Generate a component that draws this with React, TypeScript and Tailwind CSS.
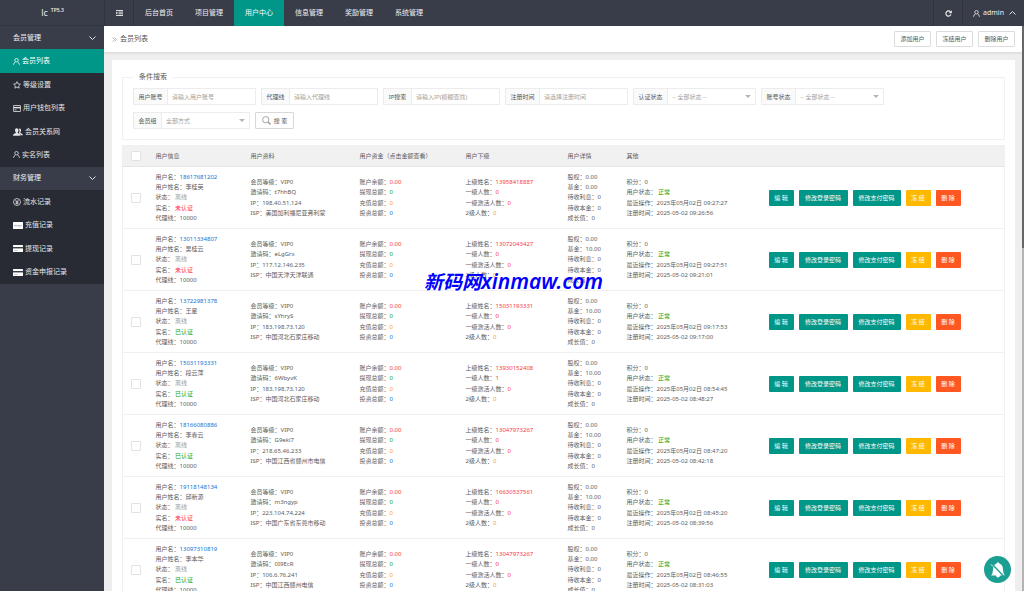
import type { ReactNode } from 'react';

type Tone = 'red' | 'green' | 'orange' | 'blue';

const tones: Record<Tone, string> = {
  red: 'text-[#f93a47]',
  green: 'text-[#0ea30e]',
  orange: 'text-[#ff9f00]',
  blue: 'text-[#0f74d4]',
};

interface User {
  phone: string;
  name: string;
  verified: boolean;
  code: string;
  ip: string;
  isp: string;
  parent: string;
  level1: number;
  fund: string;
  lastSeen: string;
  registered: string;
}

const users: User[] = [
  { phone: '18617681202', name: '李桂英', verified: false, code: 't7hhBQ', ip: '198.40.51.124', isp: '美国加利福尼亚弗利蒙', parent: '13958418887', level1: 0, fund: '0.00', lastSeen: '2025年05月02日 09:27:27', registered: '2025-05-02 09:26:56' },
  { phone: '13011334807', name: '吴桂云', verified: false, code: 'eLgGrx', ip: '117.12.146.235', isp: '中国天津天津联通', parent: '13072043427', level1: 0, fund: '10.00', lastSeen: '2025年05月02日 09:27:51', registered: '2025-05-02 09:21:01' },
  { phone: '13722981378', name: '王星', verified: true, code: 'sYhryS', ip: '183.198.73.120', isp: '中国河北石家庄移动', parent: '15031193331', level1: 0, fund: '10.00', lastSeen: '2025年05月02日 09:17:53', registered: '2025-05-02 09:17:00' },
  { phone: '15031193331', name: '段云萍', verified: true, code: '6WbyvK', ip: '183.198.73.120', isp: '中国河北石家庄移动', parent: '13930152408', level1: 1, fund: '10.00', lastSeen: '2025年05月02日 08:54:45', registered: '2025-05-02 08:48:27' },
  { phone: '18166080886', name: '李春云', verified: true, code: 'G9ekl7', ip: '218.65.46.233', isp: '中国江西省赣州市电信', parent: '13047973267', level1: 0, fund: '10.00', lastSeen: '2025年05月02日 08:47:20', registered: '2025-05-02 08:42:18' },
  { phone: '19118148134', name: '邱新源', verified: false, code: 'm3ngyp', ip: '223.104.74.224', isp: '中国广东省东莞市移动', parent: '16630537561', level1: 0, fund: '10.00', lastSeen: '2025年05月02日 08:45:20', registered: '2025-05-02 08:39:56' },
  { phone: '13097310819', name: '李本华', verified: true, code: '0I9EcR', ip: '106.6.76.241', isp: '中国江西赣州电信', parent: '13047973267', level1: 0, fund: '0.00', lastSeen: '2025年05月02日 08:46:55', registered: '2025-05-02 08:31:03' },
];

const PersonIcon = () => (
  <svg viewBox="0 0 16 16" className="size-[7px] shrink-0" fill="none" stroke="currentColor" strokeWidth="1.8" aria-hidden="true">
    <circle cx="8" cy="5" r="4" />
    <path d="M1.2 15.5c.4-3.400 2-5.500 4.600-6.800M14.800 15.500c-.4-3.400-2-5.500-4.600-6.800" />
  </svg>
);

const StarIcon = () => (
  <svg viewBox="0 0 16 16" className="size-2 shrink-0" fill="none" stroke="currentColor" strokeWidth="1.600" strokeLinejoin="round" aria-hidden="true">
    <path d="M8 1.300l2.100 4.300 4.700.7-3.400 3.300.8 4.700L8 12.100l-4.200 2.200.8-4.700L1.200 6.300l4.700-.7z" />
  </svg>
);

const WalletIcon = () => (
  <svg viewBox="0 0 16 14" className="h-[7px] w-2 shrink-0" fill="none" stroke="currentColor" strokeWidth="1.600" aria-hidden="true">
    <rect x=".8" y="1" width="14.400" height="12" rx="1" />
    <path d="M1 5.300h14" strokeWidth="2.800" />
    <path d="M3 9.800h4" />
  </svg>
);

const PeopleIcon = () => (
  <svg viewBox="0 0 20 16" className="h-2 w-[10px] shrink-0" fill="currentColor" aria-hidden="true">
    <path d="M13 1c2 0 3.200 1.500 3.200 3.700 0 1.500-.7 2.900-1.500 3.600v1.500c1.900.9 4.900 1.700 5.300 4.700h-4.500c-.4-1.800-1.800-3-4-4 .8-1 1.500-2.500 1.500-4.500 0-1.700-.5-3-1.400-4 .4-.6.800-1 1.400-1z" />
    <path d="M7.500.5C9.800.5 11 2.200 11 4.600c0 1.700-.6 3.100-1.600 4v1.600c2.200 1 5 1.800 5.400 5.300H0c.4-3.500 3.300-4.300 5.600-5.300V8.600C4.600 7.700 4 6.300 4 4.600 4 2.200 5.200.5 7.500.5z" />
  </svg>
);

const YenIcon = () => (
  <svg viewBox="0 0 16 16" className="size-2 shrink-0" fill="none" stroke="currentColor" strokeWidth="1.500" aria-hidden="true">
    <circle cx="8" cy="8" r="7" />
    <path d="M4.800 3.800L8 8l3.200-4.200M8 8v5M5 8.300h6M5 10.700h6" />
  </svg>
);

const PayIcon = () => (
  <svg viewBox="0 0 20 14" className="h-[7px] w-[10px] shrink-0" aria-hidden="true">
    <rect width="20" height="14" rx="1" fill="#fff" />
    <path d="M3 9V6h2v2H3.500M7 9V6.500h2V9M11 6v2h1.500V6v4M14.500 9V6.500H17V9" fill="none" stroke="#9a9ca1" strokeWidth="1" />
  </svg>
);

const CardIcon = () => (
  <svg viewBox="0 0 20 14" className="h-[7px] w-[10px] shrink-0" aria-hidden="true">
    <rect width="20" height="14" rx="1" fill="#fff" />
    <path d="M0 5.500h20" stroke="#282b33" strokeWidth="2.600" />
    <path d="M2 11h3.500M7 11h3" stroke="#a5a7ac" strokeWidth="1.200" />
  </svg>
);

const Chevron = ({ up = false }: { up?: boolean }) => (
  <svg viewBox="0 0 14 8" className="h-1 w-[7px] shrink-0" fill="none" stroke="currentColor" strokeWidth="1.800" aria-hidden="true">
    <path d={up ? 'M1 7l6-6 6 6' : 'M1 1l6 6 6-6'} />
  </svg>
);

function GroupTitle({ children }: { children: ReactNode }) {
  return (
    <button className="flex w-full items-center justify-between bg-[#393d49] pr-2 pl-[13px] text-left text-[#f0f0f1]">
      {children}
      <Chevron />
    </button>
  );
}

function SideLink({ icon, label, active = false }: { icon: ReactNode; label: string; active?: boolean }) {
  return (
    <a href="#" className={`flex items-center gap-[2px] pl-[13px] ${active ? 'bg-[#009688] text-white' : 'text-[#e6e6e8]'}`}>
      {icon}
      <span>{label}</span>
    </a>
  );
}

const fieldBox = 'h-[17px] w-[89px] border border-[#ececec] bg-white pl-1 text-[6px] text-[#777] outline-none rounded-none';
const fieldLabel = 'flex h-[17px] items-center justify-center border border-r-0 border-[#ececec] bg-[#fafafa] text-[6px] text-[#555]';

function Field({ id, label, hint, short = false, list = false }: { id: string; label: string; hint: string; short?: boolean; list?: boolean }) {
  return (
    <div className="flex">
      <label htmlFor={id} className={`${fieldLabel} ${short ? 'w-7' : 'w-[34px]'}`}>
        {label}
      </label>
      {list ? (
        <div className="relative flex">
          <select id={id} className={`${fieldBox} appearance-none text-[#a0a0a0]`}>
            <option>{hint}</option>
          </select>
          <svg viewBox="0 0 12 6" className="pointer-events-none absolute top-[7px] right-[5px] h-[3px] w-[6px]" fill="#b5b5b5" aria-hidden="true">
            <path d="M0 0h12L6 6z" />
          </svg>
        </div>
      ) : (
        <input id={id} type="text" placeholder={hint} className={`${fieldBox} placeholder:text-[#a0a0a0]`} />
      )}
    </div>
  );
}

function Four({ children }: { children: ReactNode }) {
  return <div className="grid h-[42px] auto-rows-fr items-center">{children}</div>;
}

function Five({ children }: { children: ReactNode }) {
  return <div className="grid h-[52px] auto-rows-fr items-center">{children}</div>;
}

function Line({ label, value, tone }: { label: string; value: ReactNode; tone?: Tone }) {
  return (
    <div>
      {label}：<span className={tone ? tones[tone] : ''}>{value}</span>
    </div>
  );
}

const action = 'h-4 rounded-[1px] text-center text-white';

function UserRow({ user }: { user: User }) {
  return (
    <tr className="h-[62px] border-b border-[#f0f0f0]">
      <td className="pl-2">
        <input type="checkbox" aria-label={user.name} className="block size-[10px] appearance-none rounded-[1px] border border-[#e2e2e2] bg-white" />
      </td>
      <td className="pl-[5px]">
        <Five>
          <Line label="用户名" value={<a href="#">{user.phone}</a>} tone="blue" />
          <Line label="用户姓名" value={user.name} />
          <div>状态： <span className="text-[#999]">离线</span></div>
          <div>实名： <span className={user.verified ? tones.green : 'text-[#ff2a36]'}>{user.verified ? '已认证' : '未认证'}</span></div>
          <Line label="代理线" value="10000" />
        </Five>
      </td>
      <td className="pl-[5px]">
        <Four>
          <Line label="会员等级" value="VIP0" />
          <Line label="邀请码" value={user.code} />
          <Line label="IP" value={user.ip} />
          <Line label="ISP" value={user.isp} />
        </Four>
      </td>
      <td className="pl-[5px]">
        <Four>
          <Line label="账户余额" value="0.00" tone="red" />
          <Line label="提现总额" value="0" tone="green" />
          <Line label="充值总额" value="0" tone="orange" />
          <Line label="投资总额" value="0" tone="blue" />
        </Four>
      </td>
      <td className="pl-[5px]">
        <Four>
          <Line label="上级姓名" value={user.parent} tone="red" />
          <Line label="一级人数" value={user.level1} tone="red" />
          <Line label="一级激活人数" value="0" tone="red" />
          <Line label="2级人数" value="0" tone="orange" />
        </Four>
      </td>
      <td className="pl-[5px]">
        <Five>
          <Line label="股权" value="0.00" />
          <Line label="基金" value={user.fund} />
          <Line label="待收利息" value="0" />
          <Line label="待收本金" value="0" />
          <Line label="成长值" value="0" />
        </Five>
      </td>
      <td className="pl-[5px]">
        <Four>
          <Line label="积分" value="0" />
          <div>用户状态： <span className={tones.green}>正常</span></div>
          <Line label="最近操作" value={user.lastSeen} />
          <Line label="注册时间" value={user.registered} />
        </Four>
      </td>
      <td className="pl-[5px]">
        <div className="flex gap-[5px]">
          <button className={`${action} w-[25px] bg-[#009688]`}>编 辑</button>
          <button className={`${action} w-[49px] bg-[#009688]`}>修改登录密码</button>
          <button className={`${action} w-12 bg-[#009688]`}>修改支付密码</button>
          <button className={`${action} w-[25px] bg-[#ffb800]`}>冻 结</button>
          <button className={`${action} w-[25px] bg-[#ff5722]`}>删 除</button>
        </div>
      </td>
    </tr>
  );
}

const topLinks = ['后台首页', '项目管理', '用户中心', '信息管理', '奖励管理', '系统管理'];

export default function App() {
  return (
    <div className="relative flex h-screen overflow-hidden bg-[#eee] font-['Noto_Sans','Noto_Sans_CJK_SC',sans-serif] text-[7px] leading-[10px] text-[#5c5c5c]">
      <aside className="flex w-[104px] shrink-0 flex-col bg-[#393d49]">
        <div className="flex h-[26px] items-center justify-center gap-[3px] border-b border-[#33363f] pl-[1px] text-[#e8e8ea]">
          <span className="text-[9px]">lc</span>
          <sup className="text-[5px] font-semibold">TP5.3</sup>
        </div>
        <nav className="grid h-[258px] auto-rows-fr bg-[#282b33]">
          <GroupTitle>会员管理</GroupTitle>
          <SideLink icon={<PersonIcon />} label="会员列表" active />
          <SideLink icon={<StarIcon />} label="等级设置" />
          <SideLink icon={<WalletIcon />} label="用户钱包列表" />
          <SideLink icon={<PeopleIcon />} label="会员关系网" />
          <SideLink icon={<PersonIcon />} label="实名列表" />
          <GroupTitle>财务管理</GroupTitle>
          <SideLink icon={<YenIcon />} label="流水记录" />
          <SideLink icon={<PayIcon />} label="充值记录" />
          <SideLink icon={<CardIcon />} label="提现记录" />
          <SideLink icon={<CardIcon />} label="资金申报记录" />
        </nav>
      </aside>

      <div className="flex min-w-0 flex-1 flex-col">
        <header className="flex h-[26px] shrink-0 bg-[#393d49] text-[#f0f0f1]">
          <button aria-label="菜单" className="flex w-[30px] items-center justify-center border-x border-[#30333d]">
            <svg viewBox="0 0 14 12" className="h-[6px] w-[7px]" fill="none" stroke="currentColor" strokeWidth="1.800" aria-hidden="true">
              <path d="M0 1h14M5 4.300h9M5 7.700h9M0 11h14M0 4l3 2-3 2" />
            </svg>
          </button>
          <nav className="flex">
            {topLinks.map((label) => (
              <a key={label} href="#" className={`flex w-[50px] items-center justify-center ${label === '用户中心' ? 'bg-[#009688] text-white' : ''}`}>
                {label}
              </a>
            ))}
          </nav>
          <button aria-label="刷新" className="ml-auto flex w-[29px] items-center justify-center border-l border-[#30333d]">
            <svg viewBox="0 0 16 16" className="size-[7px]" fill="none" stroke="currentColor" strokeWidth="2.600" aria-hidden="true">
              <path d="M13.500 10.500A6 6 0 1 1 12.500 4" />
              <path d="M15.500.5v7h-7z" fill="currentColor" stroke="none" />
            </svg>
          </button>
          <button className="flex w-[62px] items-center justify-end gap-[3px] border-l border-[#30333d] pr-2">
            <PersonIcon />
            <span className="mr-[2px]">admin</span>
            <Chevron up />
          </button>
        </header>

        <div className="flex min-h-0 flex-1">
          <main className="min-w-0 flex-1">
            <div className="flex h-[27px] items-center border-b border-[#e0e0e0] bg-white pr-[7px] pl-2 shadow-[0_1px_1px_rgba(0,0,0,0.05)]">
              <h1 className="flex items-center gap-[3px] text-[#555]">
                <svg viewBox="0 0 10 10" className="size-[5px]" fill="none" stroke="#999" strokeWidth="1.300" aria-hidden="true">
                  <path d="M1 1l4 4-4 4M5 1l4 4-4 4" />
                </svg>
                会员列表
              </h1>
              <div className="ml-auto flex gap-[5px] text-[6px]">
                {['添加用户', '冻结用户', '删除用户'].map((label) => (
                  <button key={label} className="h-4 w-[37px] rounded-[1px] border border-[#dcdcdc] bg-white text-[#555]">
                    {label}
                  </button>
                ))}
              </div>
            </div>

            <section className="mt-[7px] mr-[7px] ml-2 bg-white px-[10px] pt-3 pb-3">
              <fieldset className="h-[68px] border border-[#f0f0f0] px-[10px]">
                <legend className="px-[6px]">条件搜索</legend>
                <form className="flex flex-wrap gap-x-[5px] gap-y-[7px] pt-[6px]" onSubmit={(event) => event.preventDefault()}>
                  <Field id="account" label="用户账号" hint="请输入用户账号" />
                  <Field id="agent" label="代理线" hint="请输入代理线" short />
                  <Field id="ip" label="IP搜索" hint="请输入IP(模糊查找)" short />
                  <Field id="registered" label="注册时间" hint="请选择注册时间" />
                  <Field id="verified" label="认证状态" hint="-- 全部状态 --" list />
                  <Field id="status" label="账号状态" hint="-- 全部状态 --" list />
                  <div className="flex w-full gap-[5px]">
                    <Field id="group" label="会员组" hint="全部方式" short list />
                    <button className="flex h-[17px] w-[39px] items-center justify-center gap-[3px] rounded-[1px] border border-[#d8d8d8] text-[6px] text-[#555]">
                      <svg viewBox="0 0 18 18" className="size-[9px]" fill="none" stroke="#888" strokeWidth="1.500" aria-hidden="true">
                        <circle cx="7.500" cy="7.500" r="6.300" />
                        <path d="M12.500 12.500l4.500 4.500" strokeWidth="2.200" />
                      </svg>
                      搜 索
                    </button>
                  </div>
                </form>
              </fieldset>

              <table className="mt-[5px] w-full table-fixed border-collapse border border-[#f0f0f0] text-left text-[6px]">
                <thead>
                  <tr className="h-[21px] border-b border-[#e6e6e6] bg-[#f1f1f1]">
                    <th className="w-7 pl-2">
                      <input type="checkbox" aria-label="全选" className="block size-[10px] appearance-none rounded-[1px] border border-[#e2e2e2] bg-white" />
                    </th>
                    <th className="w-[95px] pl-[5px] font-normal">用户信息</th>
                    <th className="w-[109px] pl-[5px] font-normal">用户资料</th>
                    <th className="w-[106px] pl-[5px] font-normal">用户资金（点击金额查看）</th>
                    <th className="w-[102px] pl-[5px] font-normal">用户下级</th>
                    <th className="w-[59px] pl-[5px] font-normal">用户详情</th>
                    <th className="w-[142px] pl-[5px] font-normal">其他</th>
                    <th aria-label="操作" />
                  </tr>
                </thead>
                <tbody className="whitespace-nowrap">
                  {users.map((user) => (
                    <UserRow key={user.phone} user={user} />
                  ))}
                </tbody>
              </table>
            </section>
          </main>
          <div className="w-[2px] shrink-0 bg-[#b4b4b4]">
            <div className="h-[222px] bg-[#666]" />
          </div>
        </div>
      </div>

      <div className="pointer-events-none absolute top-[269px] left-[424px] text-[19px] leading-6 font-bold whitespace-nowrap text-[#0000ff] italic">
        新码网<span className="text-[21px] font-semibold">xinmaw.com</span>
      </div>

      <button aria-label="关闭提醒" className="absolute right-[13px] bottom-2 flex size-[27px] items-center justify-center rounded-full bg-[#1a9f92]">
        <svg viewBox="0 0 32 32" className="size-4" aria-hidden="true">
          <path d="M16 1c1.800 0 2.800 1 3 2.500 4 1 6 4 6.500 8L27 22l2.500 5H20c-.5 2.500-2 4-4 4s-3.500-1.500-4-4H2.500L5 22l1.500-10.500c.5-4 2.500-7 6.500-8C13.200 2 14.200 1 16 1z" fill="#fff" />
          <path d="M4 4l24 25" stroke="#1a9f92" strokeWidth="2.600" />
          <path d="M2 5l4 4" stroke="#fff" strokeWidth="2" />
        </svg>
      </button>
    </div>
  );
}
